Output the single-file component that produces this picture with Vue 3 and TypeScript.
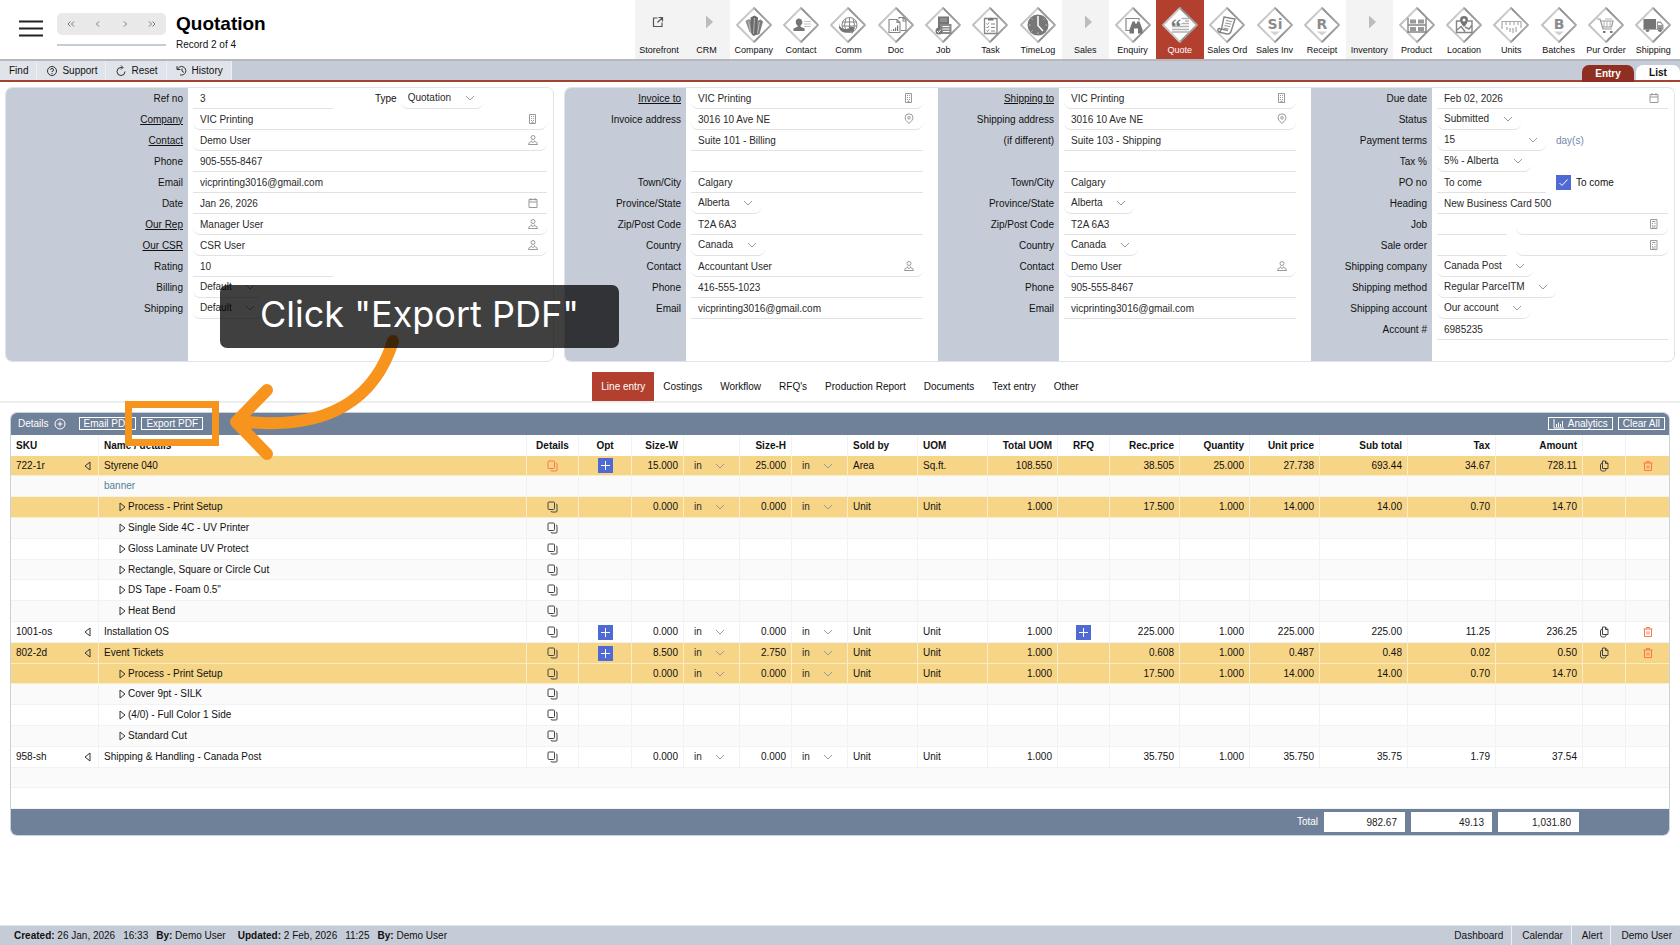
<script setup lang="ts">
import { ref } from 'vue'

interface Shape { d: string; s?: boolean; c?: string; w?: number }
interface NavItem { label: string; kind: 'icon' | 'arrow' | 'link'; shapes?: Shape[]; text?: string; active?: boolean }
interface Part { kind: 'line' | 'pick' | 'select' | 'check' | 'note' | 'label'; value: string; icon?: string; size?: string }
interface Row { label: string; link?: boolean; parts: Part[] }
interface Line {
  sku?: string; name: string; child?: boolean; note?: boolean; hot?: boolean; red?: boolean
  opt?: boolean; rfq?: boolean; tools?: boolean; v?: string[]
}

const L = '#b4b4b4'
const nav: NavItem[] = [
  { label: 'Storefront', kind: 'link' },
  { label: 'CRM', kind: 'arrow' },
  { label: 'Company', kind: 'icon', shapes: [
    { d: 'M10.500 15l3.500-2 3 2.500.5 12-3-1.500z', c: '#8a8a8a' }, { d: 'M15.500 11.500l4-2 3.500 2-1 17-3.500 1.500-2-2z', c: '#6a6a6a' },
    { d: 'M22.500 15l3-1.500 2.500 2-3.500 12.500-3 1z', c: '#7c7c7c' }, { d: 'M19.500 12l-1 16M24.500 16l-2 11M13.500 15l2 11', s: true, c: '#d6d6d6', w: 0.700 } ] },
  { label: 'Contact', kind: 'icon', shapes: [
    { d: 'M17 12.500a3.300 3.600 0 0 1 1.600 6.800v1.500l4 1.700v2.500H11.500v-2.500l4-1.700v-1.500A3.300 3.600 0 0 1 17 12.500z' }, { d: 'M22 15.500h7M22 18h7M22 20.500h7', s: true, c: '#c4c4c4', w: 1 } ] },
  { label: 'Comm', kind: 'icon', shapes: [
    { d: 'M28 19a7.500 7.500 0 1 1-15 0 7.500 7.500 0 1 1 15 0M13 16h15M13 20h15M20.500 11.500v15M17 12.500q-3 6.500 0 13M24 12.500q3 6.500 0 13', s: true, w: 1 },
    { d: 'M10 16.500l.5 3.500q4 5 10 2l-1-2 6.500 1.500-3 6.500-.8-2.500Q13 29 10 22z' } ] },
  { label: 'Doc', kind: 'icon', shapes: [
    { d: 'M12 13.500h8l3 3v10H12zM20 13.500v3h3M22 13v-1.500h4.500l2.500 2.500v10.500h-5M26 12v3h3', s: true, w: 1.100 }, { d: 'M14 24.500l1-1v1.500zM16 25v-2h1.200v2zM18 25v-3.500h1.200V25zM20 25v-5.500h1.200V25z' } ] },
  { label: 'Job', kind: 'icon', shapes: [
    { d: 'M14 10.500h11v14H14z' }, { d: 'M16 13h7M16 15h7', s: true, c: '#b9b9b9', w: 0.800 }, { d: 'M16 18h11.500v10H16z', c: '#8a8a8a' },
    { d: 'M18.500 20.500h7M18.500 23h7M18.500 25.500h7', s: true, c: '#fff', w: 1 }, { d: 'M18.500 25a3.500 3.500 0 1 1-7 0 3.500 3.500 0 1 1 7 0' }, { d: 'M13 25l1.500 1.500 2.500-3', s: true, c: '#fff', w: 1 } ] },
  { label: 'Task', kind: 'icon', shapes: [
    { d: 'M13.500 12.500h12.500v15H13.500z', s: true, w: 1.300 }, { d: 'M17 14.500v-2h1.500a1.500 1.500 0 0 1 2.500 0h1.500v2z' },
    { d: 'M15.500 17.500l1 1 1.500-2M20 18h4M15.500 21l1 1 1.500-2M20 21.500h4M15.500 24.500l1 1 1.500-2M20 25h4', s: true, w: 1 } ] },
  { label: 'TimeLog', kind: 'icon', shapes: [
    { d: 'M29.500 19a10.500 10.500 0 1 1-21 0 10.500 10.500 0 1 1 21 0', c: '#777' }, { d: 'M19 10v9.500l5 5.500', s: true, c: '#fff', w: 1.500 }, { d: 'M10 19h1.500M26.500 19h1.500M19 26.500v1.500M12.500 12.500l1 1M25.500 12.500l-1 1M12.500 25.500l1-1', s: true, c: '#ccc', w: 1 } ] },
  { label: 'Sales', kind: 'arrow' },
  { label: 'Enquiry', kind: 'icon', shapes: [
    { d: 'M16 24.500h-4V12.500h13v2', s: true, c: '#888', w: 1.200 }, { d: 'M18.500 15.500h2.500v2h2v-2h2.500l3 8v4h-4.500v-5h-4v5h-4.500v-4z' } ] },
  { label: 'Quote', kind: 'icon', active: true, text: '“', shapes: [
    { d: 'M20.500 12.500h7.500M24 15h4M20.500 17.500h7.500M11 20.500h17M11 23.500h17M11 26h17', s: true, c: L, w: 1.300 } ] },
  { label: 'Sales Ord', kind: 'icon', shapes: [
    { d: 'M16 11l11 2-4 12.500q-1 3-4 2.500l-8.500-2q2.500-.5 3-3zM10.500 26q-1.500-3 .5-3.500l9 2', s: true, w: 1.400 }, { d: 'M18 14.500l6 1.200M17.200 17l6 1.200M16.400 19.500l6 1.200M15.600 22l5 1', s: true, w: 0.900 } ] },
  { label: 'Sales Inv', kind: 'icon', text: 'Si', shapes: [{ d: 'M14 25.500h10l-5 4z', c: '#d2d2d2' }] },
  { label: 'Receipt', kind: 'icon', text: 'R', shapes: [{ d: 'M14 25.500h10l-5 4z', c: '#d2d2d2' }] },
  { label: 'Inventory', kind: 'arrow' },
  { label: 'Product', kind: 'icon', shapes: [
    { d: 'M10 12v15M28 12v15M10 19h18M10 26h18', s: true, w: 1.400 }, { d: 'M12 13.500h6v4h-6zM20 13.500h6v4h-6zM12 21h6v4h-6zM20 21h6v4h-6z', c: '#999' } ] },
  { label: 'Location', kind: 'icon', shapes: [
    { d: 'M15.500 15h-4v11.500h15.500V15h-4M12 24l4-3.500 4 5M20 21l4 2 3-4', s: true, w: 1.400 }, { d: 'M19 21q-4-4.500-4-7a4 4 0 0 1 8 0q0 2.500-4 7z' }, { d: 'M20.500 14a1.500 1.500 0 1 1-3 0 1.500 1.500 0 1 1 3 0', c: '#fff' } ] },
  { label: 'Units', kind: 'icon', shapes: [
    { d: 'M10 23v-7.500h19V22M14 16v3M18 16v3M22 16v3M26 16v3', s: true, c: '#aaa', w: 1.200 }, { d: 'M15 21v3M18 22v4M21 22v5M24 21v5', s: true, c: L, w: 1.400 } ] },
  { label: 'Batches', kind: 'icon', text: 'B', shapes: [{ d: 'M14 25.500h10l-5 4z', c: '#d2d2d2' }] },
  { label: 'Pur Order', kind: 'icon', shapes: [
    { d: 'M10 13h3l3 10h9M14 15h12l-1.500 6h-9', s: true, c: '#9a9a9a', w: 1.200 }, { d: 'M17 15v6M20 15v6M23 15v6M18 13h7', s: true, c: '#aaa', w: 0.900 }, { d: 'M16 25h2.500v2H16zM23 25h2.500v2H23z' } ] },
  { label: 'Shipping', kind: 'icon', shapes: [
    { d: 'M9.500 13H22v10H9.500z' }, { d: 'M22.800 15.500h4l2.700 3.500v4.500h-6.700z', c: '#9a9a9a' }, { d: 'M24 17h2.500l1.500 2h-4z', c: '#fff' },
    { d: 'M15.500 24a2 2 0 1 1-4 0 2 2 0 1 1 4 0M28 24a2 2 0 1 1-4 0 2 2 0 1 1 4 0', c: '#777' }, { d: 'M9 23.500h20', s: true, c: '#999', w: 0.800 } ] },
]

const glyph: Record<string, string> = {
  building: 'M2.500 1.500h6v9h-6zM4 3.500h1M6 3.500h1M4 5.500h1M6 5.500h1M4 7.500h1M6 7.500h1M5 10v-1h1v1',
  person: 'M8 3.500a2 2 0 1 1-4 0 2 2 0 1 1 4 0M1.500 10.500q0-2.500 3-3l1.500 1 1.500-1q3 .5 3 3zM4.500 6.500v1M7.500 6.500v1',
  calendar: 'M2 2.500h8v8H2zM2 5h8M4 1v2.500M8 1v2.500',
  pin: 'M6 10.500Q2 7 2 4.800a4 4 0 0 1 8 0Q10 7 6 10.500zM7.300 4.800a1.300 1.300 0 1 1-2.600 0 1.300 1.300 0 1 1 2.600 0',
  calc: 'M2.500 1.500h6.500v9H2.500zM4 3.500h3.500M4 5.500h1M6.500 5.500h1M4 7.500h1M6.500 7.500h1M4 9h3.500',
}

const line = (value: string, size = ''): Part => ({ kind: 'line', value, size })
const pick = (value: string, icon: string): Part => ({ kind: 'pick', value, icon })
const select = (value: string, size = ''): Part => ({ kind: 'select', value, size })

const general: Row[] = [
  { label: 'Ref no', parts: [line('3', 'short'), { kind: 'label', value: 'Type' }, select('Quotation')] },
  { label: 'Company', link: true, parts: [pick('VIC Printing', 'building')] },
  { label: 'Contact', link: true, parts: [pick('Demo User', 'person')] },
  { label: 'Phone', parts: [line('905-555-8467')] },
  { label: 'Email', parts: [line('vicprinting3016@gmail.com')] },
  { label: 'Date', parts: [{ kind: 'line', value: 'Jan 26, 2026', icon: 'calendar' }] },
  { label: 'Our Rep', link: true, parts: [pick('Manager User', 'person')] },
  { label: 'Our CSR', link: true, parts: [pick('CSR User', 'person')] },
  { label: 'Rating', parts: [line('10', 'short')] },
  { label: 'Billing', parts: [select('Default')] },
  { label: 'Shipping', parts: [select('Default')] },
]

const address = (titles: string[], suite: string, contact: string, phone: string): Row[] => [
  { label: titles[0], link: true, parts: [pick('VIC Printing', 'building')] },
  { label: titles[1], parts: [pick('3016 10 Ave NE', 'pin')] },
  { label: titles[2], parts: [line(suite)] },
  { label: '', parts: [line('')] },
  { label: 'Town/City', parts: [line('Calgary')] },
  { label: 'Province/State', parts: [select('Alberta')] },
  { label: 'Zip/Post Code', parts: [line('T2A 6A3')] },
  { label: 'Country', parts: [select('Canada')] },
  { label: 'Contact', parts: [pick(contact, 'person')] },
  { label: 'Phone', parts: [line(phone)] },
  { label: 'Email', parts: [line('vicprinting3016@gmail.com')] },
]

const terms: Row[] = [
  { label: 'Due date', parts: [{ kind: 'line', value: 'Feb 02, 2026', icon: 'calendar' }] },
  { label: 'Status', parts: [select('Submitted')] },
  { label: 'Payment terms', parts: [select('15', 'mid'), { kind: 'note', value: 'day(s)' }] },
  { label: 'Tax %', parts: [select('5% - Alberta')] },
  { label: 'PO no', parts: [line('To come', 'mid'), { kind: 'check', value: 'To come' }] },
  { label: 'Heading', parts: [line('New Business Card 500')] },
  { label: 'Job', parts: [line('', 'tiny'), pick('', 'calc')] },
  { label: 'Sale order', parts: [line('', 'tiny'), pick('', 'calc')] },
  { label: 'Shipping company', parts: [select('Canada Post')] },
  { label: 'Shipping method', parts: [select('Regular ParcelTM')] },
  { label: 'Shipping account', parts: [select('Our account')] },
  { label: 'Account #', parts: [line('6985235')] },
]

const panels: { key: string; rows: Row[] }[] = [
  { key: 'general', rows: general },
  { key: 'invoice', rows: address(['Invoice to', 'Invoice address', ''], 'Suite 101 - Billing', 'Accountant User', '416-555-1023') },
  { key: 'delivery', rows: address(['Shipping to', 'Shipping address', '(if different)'], 'Suite 103 - Shipping', 'Demo User', '905-555-8467') },
  { key: 'terms', rows: terms },
]

const tabs = ['Line entry', 'Costings', 'Workflow', "RFQ's", 'Production Report', 'Documents', 'Text entry', 'Other']
const activeTab = ref('Line entry')
const toCome = ref(true)

const columns: { title: string; cls: string }[] = [
  { title: 'SKU', cls: 'c-sku' }, { title: 'Name / details', cls: 'c-name' }, { title: 'Details', cls: 'c-icon mid' }, { title: 'Opt', cls: 'c-opt mid' },
  { title: 'Size-W', cls: 'c-icon num' }, { title: '', cls: 'c-unit' }, { title: 'Size-H', cls: 'c-icon num' }, { title: '', cls: 'c-unit' },
  { title: 'Sold by', cls: 'c-val' }, { title: 'UOM', cls: 'c-val' }, { title: 'Total UOM', cls: 'c-val num' }, { title: 'RFQ', cls: 'c-icon mid' },
  { title: 'Rec.price', cls: 'c-val num' }, { title: 'Quantity', cls: 'c-val num' }, { title: 'Unit price', cls: 'c-val num' },
  { title: 'Sub total', cls: 'c-sum num' }, { title: 'Tax', cls: 'c-sum num' }, { title: 'Amount', cls: 'c-amt num' },
  { title: '', cls: 'c-tool' }, { title: '', cls: 'c-tool' },
]

const setup = ['0.000', '0.000', 'Unit', 'Unit', '1.000', '17.500', '1.000', '14.000', '14.00', '0.70', '14.70']
const lines: Line[] = [
  { sku: '722-1r', name: 'Styrene 040', hot: true, red: true, opt: true, tools: true, v: ['15.000', '25.000', 'Area', 'Sq.ft.', '108.550', '38.505', '25.000', '27.738', '693.44', '34.67', '728.11'] },
  { name: 'banner', note: true },
  { name: 'Process - Print Setup', child: true, hot: true, v: setup },
  { name: 'Single Side 4C - UV Printer', child: true },
  { name: 'Gloss Laminate UV Protect', child: true },
  { name: 'Rectangle, Square or Circle Cut', child: true },
  { name: 'DS Tape - Foam 0.5"', child: true },
  { name: 'Heat Bend', child: true },
  { sku: '1001-os', name: 'Installation OS', opt: true, rfq: true, tools: true, v: ['0.000', '0.000', 'Unit', 'Unit', '1.000', '225.000', '1.000', '225.000', '225.00', '11.25', '236.25'] },
  { sku: '802-2d', name: 'Event Tickets', hot: true, opt: true, tools: true, v: ['8.500', '2.750', 'Unit', 'Unit', '1.000', '0.608', '1.000', '0.487', '0.48', '0.02', '0.50'] },
  { name: 'Process - Print Setup', child: true, hot: true, v: setup },
  { name: 'Cover 9pt - SILK', child: true },
  { name: '(4/0) - Full Color 1 Side', child: true },
  { name: 'Standard Cut', child: true },
  { sku: '958-sh', name: 'Shipping & Handling - Canada Post', v: ['0.000', '0.000', 'Unit', 'Unit', '1.000', '35.750', '1.000', '35.750', '35.75', '1.79', '37.54'] },
]
const totals = [
  { name: 'Sub total', value: '982.67' },
  { name: 'Tax total', value: '49.13' },
  { name: 'Amount total', value: '1,031.80' },
]
</script>

<template>
  <div class="page">
    <header class="top">
      <button class="burger" type="button" aria-label="Menu">
        <svg width="26" height="18" viewBox="0 0 26 18"><path d="M1 1.500h24M1 8.500h24M1 15.500h24" stroke="#222" stroke-width="2.200" /></svg>
      </button>
      <div class="recnav">
        <div class="steps">
          <button type="button" aria-label="First record"><svg width="10" height="8" viewBox="0 0 10 8"><path d="M4.500 1.500L2 4l2.500 2.500M8 1.500L5.500 4 8 6.500" /></svg></button>
          <button type="button" aria-label="Previous record"><svg width="10" height="8" viewBox="0 0 10 8"><path d="M6 1.500L3.500 4 6 6.500" /></svg></button>
          <button type="button" aria-label="Next record"><svg width="10" height="8" viewBox="0 0 10 8"><path d="M4 1.500L6.500 4 4 6.500" /></svg></button>
          <button type="button" aria-label="Last record"><svg width="10" height="8" viewBox="0 0 10 8"><path d="M2 1.500L4.500 4 2 6.500M5.500 1.500L8 4 5.500 6.500" /></svg></button>
        </div>
        <div class="rule"></div>
      </div>
      <div class="heading">
        <h1>Quotation</h1>
        <p>Record 2 of 4</p>
      </div>
      <nav class="modules">
        <a v-for="n in nav" :key="n.label" href="#" class="module" :class="{ plain: n.kind !== 'icon', active: n.active }">
          <svg width="38" height="38" viewBox="0 0 38 38" aria-hidden="true">
            <template v-if="n.kind === 'link'">
              <path d="M17.500 12h-4v8.500h8.500V16.500M18.500 11.500h4v4M22.500 11.500l-5 5" fill="none" stroke="#555" stroke-width="1.200" />
            </template>
            <path v-else-if="n.kind === 'arrow'" d="M19 9.500l7 6.500-7 6.500z" fill="#bcbcbc" />
            <template v-else>
              <defs>
                <linearGradient id="edge" x1="0" y1="0" x2="1" y2="0"><stop offset="0" stop-color="#bdbdbd" /><stop offset="0.450" stop-color="#cfcfcf" /><stop offset="0.550" stop-color="#8c8c8c" /><stop offset="1" stop-color="#a8a8a8" /></linearGradient>
              </defs>
              <path d="M19 2L36 19 19 36 2 19z" fill="#fff" stroke="url(#edge)" stroke-width="1.800" stroke-linejoin="round" />
              <path v-for="(s, i) in n.shapes" :key="i" :d="s.d" :fill="s.s ? 'none' : s.c || '#757575'" :stroke="s.s ? s.c || '#858585' : 'none'" :stroke-width="s.w || 1" />
              <text v-if="n.text" :x="n.active ? 15 : 19" :y="n.active ? 28 : 23" :class="n.active ? 'mark' : 'letter'" text-anchor="middle">{{ n.text }}</text>
            </template>
          </svg>
          <span>{{ n.label }}</span>
        </a>
      </nav>
    </header>

    <div class="toolbar">
      <button type="button">Find</button>
      <button type="button">
        <svg width="12" height="12" viewBox="0 0 12 12"><path d="M10.500 6a4.500 4.500 0 1 1-9 0 4.500 4.500 0 1 1 9 0M4.500 4.800a1.500 1.500 0 1 1 1.500 1.600v.6M6 8v1" /></svg>Support
      </button>
      <button type="button">
        <svg width="12" height="12" viewBox="0 0 12 12"><path d="M7.500 2.500H6A4 4 0 1 0 10 6.500M6 .5l2 2-2 2" /></svg>Reset
      </button>
      <button type="button">
        <svg width="12" height="12" viewBox="0 0 12 12"><path d="M1 1v3.500h3.500M1.500 4.300A4.300 4.300 0 1 1 4 9.800M6 3.500V6l2 1.500" /></svg>History
      </button>
      <div class="views">
        <button type="button" class="on">Entry</button>
        <button type="button">List</button>
      </div>
    </div>

    <main>
      <form class="panels" @submit.prevent>
        <section v-for="p in panels" :key="p.key" class="panel" :class="p.key">
          <div class="labels">
            <div v-for="(r, i) in p.rows" :key="i" class="cell">
              <a v-if="r.link" :id="`${p.key}-l${i}`" href="#">{{ r.label }}</a>
              <label v-else :id="`${p.key}-l${i}`" :for="`${p.key}-${i}-0`">{{ r.label }}</label>
            </div>
          </div>
          <div class="fields">
            <div v-for="(r, i) in p.rows" :key="i" class="cell">
              <template v-for="(f, j) in r.parts" :key="j">
                <label v-if="f.kind === 'label'" class="inline-label" :for="`${p.key}-${i}-${j + 1}`">{{ f.value }}</label>
                <span v-else-if="f.kind === 'note'" class="note">{{ f.value }}</span>
                <label v-else-if="f.kind === 'check'" class="check">
                  <input v-model="toCome" type="checkbox" />
                  <svg width="15" height="15" viewBox="0 0 15 15"><path d="M3.500 8l2.500 2.500L11.500 4.500" /></svg>
                  <span>{{ f.value }}</span>
                </label>
                <span v-else-if="f.kind === 'select'" class="select" :class="f.size">
                  <select :id="`${p.key}-${i}-${j}`"><option>{{ f.value }}</option></select>
                  <svg width="10" height="6" viewBox="0 0 10 6"><path d="M1 1l4 4 4-4" /></svg>
                </span>
                <span v-else class="box" :class="[f.kind, f.size]">
                  <input :id="`${p.key}-${i}-${j}`" type="text" :value="f.value" :aria-labelledby="`${p.key}-l${i}`" />
                  <svg v-if="f.icon" width="12" height="12" viewBox="0 0 12 12"><path :d="glyph[f.icon]" /></svg>
                </span>
              </template>
            </div>
          </div>
        </section>
      </form>

      <div class="tabs" role="tablist">
        <button v-for="t in tabs" :key="t" type="button" role="tab" :class="{ on: t === activeTab }" @click="activeTab = t">{{ t }}</button>
      </div>

      <section class="details">
        <div class="bar">
          <span>Details</span>
          <button type="button" class="add" aria-label="Add line"><svg width="12" height="12" viewBox="0 0 12 12"><path d="M11 6A5 5 0 1 1 1 6a5 5 0 1 1 10 0M3.500 6h5M6 3.500v5" /></svg></button>
          <button type="button" class="ghost">Email PDF</button>
          <button type="button" class="ghost">Export PDF</button>
          <button type="button" class="ghost push"><svg width="11" height="10" viewBox="0 0 11 10"><path d="M1 0v9h10M3.500 8V5M5.500 8V3.500M7.500 8V5M9.500 8V2" /></svg>Analytics</button>
          <button type="button" class="ghost">Clear All</button>
        </div>
        <table>
          <thead>
            <tr><th v-for="(c, i) in columns" :key="i" :class="c.cls">{{ c.title }}</th></tr>
          </thead>
          <tbody>
            <tr v-for="(r, i) in lines" :key="i" :class="{ hot: r.hot }">
              <td>
                <div v-if="r.sku" class="sku">{{ r.sku }}<svg width="7" height="10" viewBox="0 0 7 10"><path d="M6 1v8L1 5z" /></svg></div>
              </td>
              <td>
                <div v-if="r.child" class="child"><svg width="7" height="10" viewBox="0 0 7 10"><path d="M1 1v8l5-4z" /></svg>{{ r.name }}</div>
                <span v-else :class="{ remark: r.note }">{{ r.name }}</span>
              </td>
              <td class="mid">
                <button v-if="!r.note" type="button" class="ico" :class="{ red: r.red }" aria-label="Details"><svg width="12" height="12" viewBox="0 0 12 12"><path d="M2 1h4.500q1 0 1 1v5.500q0 1-1 1h-4.500q-1 0-1-1V2q0-1 1-1M9 3q1 0 1 1v6q0 1-1 1H5q-1 0-1-1" /></svg></button>
              </td>
              <td class="mid"><button v-if="r.opt" type="button" class="plus" aria-label="Options"><svg width="15" height="15" viewBox="0 0 15 15"><path d="M3 7.500h9M7.500 3v9" /></svg></button></td>
              <template v-for="k in 2" :key="k">
                <td class="num">{{ r.v?.[k - 1] }}</td>
                <td class="unit">
                  <span v-if="r.v" class="select flat">
                    <select :aria-label="k === 1 ? 'Width unit' : 'Height unit'"><option>in</option></select>
                    <svg width="10" height="6" viewBox="0 0 10 6"><path d="M1 1l4 4 4-4" /></svg>
                  </span>
                </td>
              </template>
              <td>{{ r.v?.[2] }}</td>
              <td>{{ r.v?.[3] }}</td>
              <td class="num">{{ r.v?.[4] }}</td>
              <td class="mid"><button v-if="r.rfq" type="button" class="plus" aria-label="RFQ"><svg width="15" height="15" viewBox="0 0 15 15"><path d="M3 7.500h9M7.500 3v9" /></svg></button></td>
              <td v-for="k in 6" :key="'n' + k" class="num">{{ r.v?.[k + 4] }}</td>
              <td class="mid"><button v-if="r.tools" type="button" class="ico" aria-label="Duplicate"><svg width="12" height="12" viewBox="0 0 12 12"><path d="M4.500 1h3l2.500 2.500v5H4.500zM7.500 1v2.500H10M4.500 3q-2 0-2 2v4q0 2 2 2h2q1.500 0 1.500-2" /></svg></button></td>
              <td class="mid"><button v-if="r.tools" type="button" class="ico red" aria-label="Delete"><svg width="12" height="12" viewBox="0 0 12 12"><path d="M1.500 3h9M4.500 3V1.500h3V3M2.500 3v7.500h7V3M5 5.500v3M7 5.500v3" /></svg></button></td>
            </tr>
            <tr class="blank"><td colspan="20"></td></tr>
            <tr class="blank"><td colspan="20"></td></tr>
          </tbody>
        </table>
        <div class="totals">
          <span>Total</span>
          <input v-for="t in totals" :key="t.name" type="text" readonly :value="t.value" :aria-label="t.name" />
        </div>
      </section>
    </main>

    <footer class="status">
      <p class="stamp"><span><b>Created:</b> 26 Jan, 2026</span><span>16:33</span><span><b>By:</b> Demo User</span></p>
      <p class="stamp"><span><b>Updated:</b> 2 Feb, 2026</span><span>11:25</span><span><b>By:</b> Demo User</span></p>
      <div class="links">
        <a href="#">Dashboard</a><a href="#">Calendar</a><a href="#">Alert</a><a href="#">Demo User</a>
      </div>
    </footer>

    <div class="guide">
      <div class="frame"></div>
      <svg class="arrow" width="190" height="140" viewBox="0 0 190 140">
        <path d="M173 21C156 76 112 110 27 102M47 70L16 102l31 32" fill="none" stroke="#f7941d" stroke-width="12" stroke-linecap="round" stroke-linejoin="round" />
      </svg>
      <div class="callout">Click "Export PDF"</div>
    </div>
  </div>
</template>

<style>
body { margin: 0; background: #fff; }
</style>

<style scoped>
* { box-sizing: border-box; }
.page {
  position: relative; display: flex; flex-direction: column; min-height: 100vh;
  font-family: "Liberation Sans", Arial, sans-serif; font-size: 10px; line-height: 14px; color: #111;
}
button, input, select { font: inherit; color: inherit; margin: 0; padding: 0; border: 0; background: none; border-radius: 0; outline: 0; }
button { cursor: pointer; }
p, h1 { margin: 0; }
svg { display: block; flex: none; }
a { color: inherit; }

.top { display: flex; height: 61px; border-bottom: 2px solid #b6b8bc; }
.burger { align-self: flex-start; margin: 20px 0 0 18px; }
.recnav { width: 109px; margin: 13px 0 0 13px; }
.steps { display: flex; height: 22px; border-radius: 5px; background: #e9e9e9; }
.steps button { flex: 1; display: flex; align-items: center; justify-content: center; }
.steps path { fill: none; stroke: #777; stroke-width: 1; }
.rule { height: 2px; margin-top: 9px; background: #c5ccd7; }
.heading { margin: 12px 0 0 10px; }
h1 { margin-bottom: 2px; font-size: 19px; line-height: 24px; color: #000; }
.modules { display: grid; grid-template-columns: repeat(22, 1fr); width: 62%; margin: 0 3px 0 auto; }
.module { display: flex; flex-direction: column; align-items: center; min-width: 0; padding-top: 6px; font-size: 9px; line-height: 13px; white-space: nowrap; text-decoration: none; }
.module.plain { background: #f3f3f3; }
.module.active { background: #b3402f; color: #fff; }
.letter { font: bold 14px "DejaVu Sans", sans-serif; fill: #8c8c8c; }
.mark { font: bold 21px "Liberation Serif", serif; fill: #777; }

.toolbar { display: flex; height: 21px; background: #c5ccd7; border-bottom: 2px solid #a2432f; }
.toolbar > button { display: flex; align-items: center; gap: 4px; padding: 1px 8px 0 9px; background: #e0e4ea; border-right: 1px solid #eceff3; }
.toolbar svg path { fill: none; stroke: #333; stroke-width: 1; }
.views { display: flex; gap: 2px; margin-left: auto; padding-top: 4px; }
.views button { width: 52px; height: 17px; border-radius: 7px 7px 0 0; background: #fff; font-weight: bold; }
.views button:last-child { width: 44px; height: 15px; }
.views .on { background: #8e2f22; color: #fff; }

.panels { display: grid; grid-template-columns: 549fr 384fr 373fr 364fr; padding: 5px 5px 0; }
.panel { display: flex; border: 1px solid #dfe4ec; background: #fff; overflow: hidden; }
.panel.general { border-radius: 7px; }
.panel.invoice { margin-left: 10px; border-right: 0; border-radius: 7px 0 0 7px; }
.panel.delivery { border-left: 0; border-right: 0; }
.panel.terms { border-left: 0; border-radius: 0 7px 7px 0; }
.labels { flex: none; width: 121px; padding: 0 5px 21px 0; background: #c5ccd7; }
.general .labels { width: 182px; }
.labels .cell { justify-content: flex-end; }
.fields { flex: 1; min-width: 0; padding: 0 15px 0 5px; }
.general .fields, .terms .fields { padding-right: 6px; }
.cell { display: flex; align-items: center; height: 21px; white-space: nowrap; }
.box { display: flex; align-items: center; flex: 1; min-width: 0; height: 20px; padding: 0 8px 0 7px; border-bottom: 1px solid #e2e2e2; }
.box input { flex: 1; min-width: 0; width: 100%; height: 18px; color: #2a2a2a; }
.box svg path, .select svg path { fill: none; stroke: #999; stroke-width: 1; }
.pick, .select { border-radius: 7px; }
.box.short { flex: none; width: 140px; }
.box.mid { flex: none; width: 109px; padding-right: 0; }
.box.tiny { flex: none; width: 70px; margin-right: 9px; }
.select { display: inline-grid; align-items: center; height: 20px; border-bottom: 1px solid #e2e2e2; }
.select > * { grid-area: 1 / 1; }
.select select { appearance: none; height: 18px; padding: 0 31px 0 7px; color: #2a2a2a; }
.select svg { justify-self: end; margin-right: 8px; pointer-events: none; }
.select.mid { width: 109px; }
.inline-label { margin: 0 4px 0 42px; }
.note { margin-left: 10px; color: #7288ab; }
.check { display: grid; grid-template-columns: 15px auto; column-gap: 5px; align-items: center; margin-left: 10px; }
.check input { appearance: none; grid-area: 1 / 1; width: 15px; height: 15px; border: 1px solid #4f6bd3; }
.check input:checked { background: #4f6bd3; }
.check svg { grid-area: 1 / 1; pointer-events: none; }
.check svg path { fill: none; stroke: #fff; stroke-width: 1; }

.tabs { display: flex; justify-content: center; margin-top: 10px; border-bottom: 2px solid #ededed; }
.tabs button { height: 29px; padding: 0 9px; }
.tabs .on { background: #b3402f; color: #fff; }

.details { margin: 9px 10px 0; border: 1px solid #c9d1dd; border-radius: 7px; overflow: hidden; }
.bar { display: flex; align-items: center; height: 22px; padding: 0 4px 1px 7px; background: #6f8199; color: #fff; }
.bar svg path { fill: none; stroke: #fff; stroke-width: 1; }
.add { margin: 0 13px 0 5px; }
.ghost { display: flex; align-items: center; gap: 4px; height: 13px; margin-right: 5px; padding: 0 4px; border: 1px solid #fff; line-height: 11px; }
.ghost:last-child { margin-right: 0; }
.push { margin-left: auto; }

table { width: 100%; table-layout: fixed; border-collapse: separate; border-spacing: 0; }
th, td { height: 21px; padding: 0 5px; border-right: 1px solid #f2f2f2; border-bottom: 1px solid #f2f2f2; text-align: left; white-space: nowrap; line-height: 14px; }
th { border-bottom: 0; }
tbody tr:nth-child(5n + 1) td { height: 20px; }
tbody tr:nth-child(even) { background: #fafafa; }
tbody tr.hot { background: #f7d586; }
.hot td { border-color: #fbecc9; }
th:last-child, td:last-child, .blank td { border-right: 0; }
.num { text-align: right; }
.mid { text-align: center; }
.c-sku { width: 88px; }
.c-icon { width: 52px; }
.c-opt { width: 53px; }
.c-unit { width: 56px; }
.c-val { width: 70px; }
.c-sum { width: 88px; }
.c-amt { width: 87px; }
.c-tool { width: 43px; }
.sku { display: flex; justify-content: space-between; align-items: center; padding-right: 2px; }
.child { display: flex; align-items: center; gap: 2px; padding-left: 15px; }
.sku path, .child path { fill: none; stroke: #333; stroke-width: 1; }
.remark { color: #52809a; }
.ico, .plus { display: block; margin: 0 auto; }
.ico path { fill: none; stroke: #444; stroke-width: 1; }
.ico.red path { stroke: #ff7350; }
.plus { background: #4f6bd3; }
.plus path { fill: none; stroke: #fff; stroke-width: 1; }
td.unit { padding: 0; }
.select.flat { display: grid; height: 18px; border: 0; }
.select.flat select { width: 100%; padding: 0 20px 0 10px; }
.select.flat svg { margin-right: 14px; }
.totals { display: flex; align-items: center; justify-content: flex-end; gap: 6px; height: 26px; padding-right: 90px; background: #6f8199; color: #fff; }
.totals input { width: 81px; height: 20px; padding: 0 8px; background: #fff; color: #1c1c1c; text-align: right; }

.status { display: flex; align-items: center; height: 20px; margin-top: auto; padding-left: 14px; background: #c5ccd7; border-top: 1px solid #dfe3ea; }
.stamp { display: flex; gap: 8px; margin-right: 12px; }
.links { display: flex; align-self: stretch; margin-left: auto; }
.links a { padding: 3px 8px 0 10px; border-left: 1px solid #eceff3; text-decoration: none; }
.links a:first-child { border-left: 0; }

.guide { position: absolute; top: 0; left: 0; pointer-events: none; }
.frame { position: absolute; top: 401px; left: 125px; width: 94px; height: 45px; border: 7px solid #f7941d; }
.arrow { position: absolute; top: 320px; left: 220px; }
.callout {
  position: absolute; top: 285px; left: 220px; width: 399px; height: 63px; border-radius: 7px; background: rgba(0, 0, 0, 0.75);
  color: #fff; font-family: Inter, sans-serif; font-size: 36px; line-height: 59px; text-align: center; white-space: nowrap;
}
</style>
